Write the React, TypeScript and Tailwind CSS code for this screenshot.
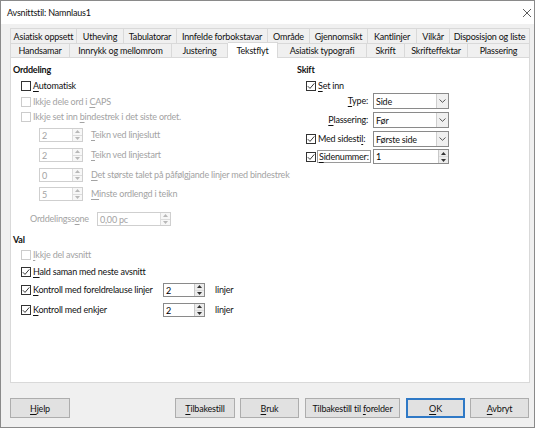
import React from "react";

const U = ({ children }: { children: React.ReactNode }) => (
  <span className="underline decoration-[1px] underline-offset-[1.5px]">{children}</span>
);

function Cb({ checked, disabled }: { checked?: boolean; disabled?: boolean }) {
  return (
    <span
      className={`w-[10px] h-[10px] border bg-white flex items-center justify-center shrink-0 ${
        disabled ? "border-[#cccccc]" : "border-[#333333]"
      }`}
    >
      {checked && (
        <svg width="8" height="8" viewBox="0 0 8 8">
          <path d="M0.8 4.2 L3 6.4 L7.3 1.4" stroke="#222" strokeWidth="0.9" fill="none" />
        </svg>
      )}
    </span>
  );
}

function Arrows({ disabled }: { disabled?: boolean }) {
  const c = disabled ? "#b8b8b8" : "#333";
  return (
    <div className={`w-[10px] flex flex-col border-l ${disabled ? "border-[#dddddd] bg-[#f7f7f7]" : "border-[#c8c8c8] bg-[#ececec]"}`}>
      <div className="flex-1 flex items-center justify-center border-b border-[#dcdcdc]">
        <svg width="5" height="3" viewBox="0 0 5 3">
          <path d="M0 3 L2.5 0 L5 3 Z" fill={c} />
        </svg>
      </div>
      <div className="flex-1 flex items-center justify-center">
        <svg width="5" height="3" viewBox="0 0 5 3">
          <path d="M0 0 L2.5 3 L5 0 Z" fill={c} />
        </svg>
      </div>
    </div>
  );
}

function Spin({ value, cls, disabled }: { value: string; cls: string; disabled?: boolean }) {
  return (
    <div
      className={`flex bg-white border shrink-0 ${cls} ${
        disabled ? "border-[#cfcfcf] text-[#a3a3a3]" : "border-[#8a8a8a] text-black"
      }`}
    >
      <div className="flex-1 pl-[2px] flex items-center leading-none">{value}</div>
      <Arrows disabled={disabled} />
    </div>
  );
}

function Drop({ value }: { value: string }) {
  return (
    <div className="w-[76px] h-[16px] flex border border-[#8a8a8a] bg-white shrink-0">
      <div className="flex-1 pl-[2px] flex items-center leading-none">{value}</div>
      <div className="w-[12px] bg-[#f0f0f0] border-l border-[#cfcfcf] flex items-center justify-center">
        <svg width="7" height="4" viewBox="0 0 7 4">
          <path d="M0.5 0.5 L3.5 3.3 L6.5 0.5" stroke="#444" strokeWidth="0.9" fill="none" />
        </svg>
      </div>
    </div>
  );
}

function Tab({ label, w, first }: { label: string; w: string; first?: boolean }) {
  return (
    <div
      className={`${w} h-full flex items-center justify-center border-t border-r border-[#d9d9d9] bg-[#f0f0f0] leading-none ${
        first ? "border-l" : ""
      }`}
    >
      {label}
    </div>
  );
}

function Btn({ children, w, primary, ml }: { children: React.ReactNode; w: string; primary?: boolean; ml: string }) {
  return (
    <div
      className={`${w} ${ml} h-[20px] flex items-center justify-center leading-none bg-[#e1e1e1] ${
        primary ? "border-2 border-[#2f79c6]" : "border border-[#adadad]"
      }`}
    >
      {children}
    </div>
  );
}

export default function App() {
  const dis = "text-[#a3a3a3]";
  return (
    <div className="w-[540px] h-[429px] bg-white font-['Lato',sans-serif] text-[9px] tracking-[-0.2px] text-[#111] whitespace-nowrap">
      <div className="w-[535px] h-[428px] border border-[#8a8a8a] bg-[#f0f0f0] flex flex-col">
        {/* Title bar */}
        <div className="h-[23px] bg-white flex items-center justify-between pl-[6px] pr-[2px]">
          <span className="text-[9px] leading-none">Avsnittstil: Namnlaus1</span>
          <svg width="10" height="10" viewBox="0 0 10 10">
            <path d="M1 1 L9 9 M9 1 L1 9" stroke="#333" strokeWidth="0.8" />
          </svg>
        </div>

        {/* Tabs row 1 */}
        <div className="mt-[4px] ml-[9px] h-[15px] flex">
          <Tab first label="Asiatisk oppsett" w="w-[67px]" />
          <Tab label="Utheving" w="w-[47px]" />
          <Tab label="Tabulatorar" w="w-[53px]" />
          <Tab label="Innfelde forbokstavar" w="w-[91px]" />
          <Tab label="Område" w="w-[42px]" />
          <Tab label="Gjennomsikt" w="w-[58px]" />
          <Tab label="Kantlinjer" w="w-[49px]" />
          <Tab label="Vilkår" w="w-[33px]" />
          <Tab label="Disposisjon og liste" w="w-[80px]" />
        </div>
        {/* Tabs row 2 */}
        <div className="ml-[9px] h-[14px] flex">
          <Tab first label="Handsamar" w="w-[60px]" />
          <Tab label="Innrykk og mellomrom" w="w-[102px]" />
          <Tab label="Justering" w="w-[56px]" />
          <div className="w-[50px] h-[16px] relative -top-[1px] z-10 bg-white border-t border-r border-[#d9d9d9] flex items-center justify-center leading-none">
            Tekstflyt
          </div>
          <Tab label="Asiatisk typografi" w="w-[89px]" />
          <Tab label="Skrift" w="w-[38px]" />
          <Tab label="Skrifteffektar" w="w-[63px]" />
          <Tab label="Plassering" w="w-[62px]" />
        </div>

        {/* Panel */}
        <div className="ml-[9px] w-[520px] h-[326px] border border-[#d9d9d9] bg-white flex flex-col">
          <div className="flex">
            {/* Left column */}
            <div className="w-[284px] pt-[4px] flex flex-col">
              <div className="h-[16px] pl-[2px] flex items-center font-bold">Orddeling</div>
              <div className="h-[16px] pl-[10px] flex items-center gap-[2px]">
                <Cb />
                <span><U>A</U>utomatisk</span>
              </div>
              <div className={`h-[15px] pl-[10px] flex items-center gap-[2px] ${dis}`}>
                <Cb disabled />
                <span>Ikkje dele ord i <U>C</U>APS</span>
              </div>
              <div className={`h-[16px] pl-[10px] flex items-center gap-[2px] ${dis}`}>
                <Cb disabled />
                <span>Ikkje set inn <U>b</U>indestrek i det siste ordet.</span>
              </div>
              <div className={`mt-[2px] h-[16px] pl-[28px] flex items-center ${dis}`}>
                <Spin disabled value="2" cls="w-[44px] h-[14px]" />
                <span className="ml-[8px]"><U>T</U>eikn ved linjeslutt</span>
              </div>
              <div className={`mt-[4px] h-[16px] pl-[28px] flex items-center ${dis}`}>
                <Spin disabled value="2" cls="w-[44px] h-[14px]" />
                <span className="ml-[8px]"><U>T</U>eikn ved linjestart</span>
              </div>
              <div className={`mt-[4px] h-[16px] pl-[28px] flex items-center ${dis}`}>
                <Spin disabled value="0" cls="w-[44px] h-[14px]" />
                <span className="ml-[8px]"><U>D</U>et største talet på påfølgjande linjer med bindestrek</span>
              </div>
              <div className={`mt-[3px] h-[16px] pl-[28px] flex items-center ${dis}`}>
                <Spin disabled value="5" cls="w-[44px] h-[14px]" />
                <span className="ml-[8px]"><U>M</U>inste ordlengd i teikn</span>
              </div>
              <div className={`mt-[9px] h-[16px] pl-[19px] flex items-center ${dis}`}>
                <span className="w-[67px]">Orddelingss<U>o</U>ne</span>
                <Spin disabled value="0,00 pc" cls="w-[74px] h-[14px]" />
              </div>
            </div>

            {/* Right column */}
            <div className="pt-[4px] flex flex-col">
              <div className="h-[16px] pl-[2px] flex items-center font-bold">Skift</div>
              <div className="h-[15px] pl-[11px] flex items-center gap-[2px]">
                <Cb checked />
                <span><U>S</U>et inn</span>
              </div>
              <div className="h-[16px] pl-[11px] flex items-center">
                <span className="w-[62px] text-right"><U>T</U>ype:</span>
                <span className="ml-[5px]"><Drop value="Side" /></span>
              </div>
              <div className="mt-[3px] h-[16px] pl-[11px] flex items-center">
                <span className="w-[62px] text-right"><U>P</U>lassering:</span>
                <span className="ml-[5px]"><Drop value="Før" /></span>
              </div>
              <div className="mt-[3px] h-[16px] pl-[11px] flex items-center">
                <span className="w-[62px] flex items-center gap-[2px]">
                  <Cb checked />
                  <span>Med sidesti<U>l</U>:</span>
                </span>
                <span className="ml-[5px]"><Drop value="Første side" /></span>
              </div>
              <div className="mt-[2px] h-[15px] pl-[11px] flex items-center">
                <span className="w-[62px] flex items-center gap-[1px]">
                  <Cb checked />
                  <span className="border border-[#9a9a9a] px-[1px] leading-[11px]"><U>S</U>idenummer:</span>
                </span>
                <span className="ml-[5px]"><Spin value="1" cls="w-[76px] h-[15px]" /></span>
              </div>
            </div>
          </div>

          {/* Val */}
          <div className="mt-[5px] h-[15px] pl-[2px] flex items-center font-bold">Val</div>
          <div className={`h-[16px] pl-[10px] flex items-center gap-[2px] ${dis}`}>
            <Cb disabled />
            <span><U>I</U>kkje del avsnitt</span>
          </div>
          <div className="mt-[1px] h-[16px] pl-[10px] flex items-center gap-[2px]">
            <Cb checked />
            <span><U>H</U>ald saman med neste avsnitt</span>
          </div>
          <div className="mt-[2px] h-[16px] pl-[10px] flex items-center">
            <span className="w-[142px] flex items-center gap-[2px]">
              <Cb checked />
              <span><U>K</U>ontroll med foreldrelause linjer</span>
            </span>
            <Spin value="2" cls="w-[42px] h-[14px]" />
            <span className="ml-[10px]">linjer</span>
          </div>
          <div className="mt-[4px] h-[16px] pl-[10px] flex items-center">
            <span className="w-[142px] flex items-center gap-[2px]">
              <Cb checked />
              <span><U>K</U>ontroll med enkjer</span>
            </span>
            <Spin value="2" cls="w-[42px] h-[14px]" />
            <span className="ml-[10px]">linjer</span>
          </div>
        </div>

        {/* Buttons */}
        <div className="mt-[15px] flex">
          <Btn w="w-[60px]" ml="ml-[9px]"><span><U>H</U>jelp</span></Btn>
          <Btn w="w-[60px]" ml="ml-[105px]"><span><U>T</U>ilbakestill</span></Btn>
          <Btn w="w-[59px]" ml="ml-[5px]"><span><U>B</U>ruk</span></Btn>
          <Btn w="w-[95px]" ml="ml-[6px]"><span>Tilbakestill til <U>f</U>orelder</span></Btn>
          <Btn w="w-[59px]" ml="ml-[6px]" primary><span><U>O</U>K</span></Btn>
          <Btn w="w-[59px]" ml="ml-[5px]"><span><U>A</U>vbryt</span></Btn>
        </div>
      </div>
    </div>
  );
}
